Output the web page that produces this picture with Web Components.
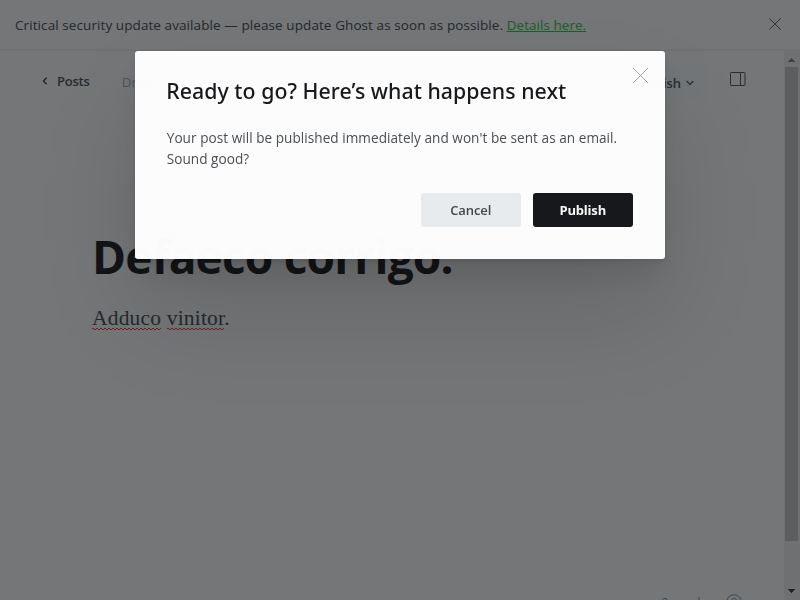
<!DOCTYPE html>
<html lang="en"><head><meta charset="utf-8"><title>Editor</title>
<style>html,body{margin:0;height:100%;overflow:hidden}body{font-family:"Open Sans","Noto Sans",sans-serif;background:#747678;color:#24282c}</style></head>
<body>
<gh-app></gh-app>
<gh-modal><span slot="title">Ready to go? Here’s what happens next</span><span slot="body">Your post will be published immediately and won't be sent as an email.<br>Sound good?</span>
<gh-button slot="actions">Cancel</gh-button><gh-button slot="actions" primary>Publish</gh-button></gh-modal>
<script>
const define=(name,html)=>{const t=document.createElement('template');t.innerHTML=html;
customElements.define(name,class extends HTMLElement{constructor(){super();this.attachShadow({mode:'open'}).append(t.content.cloneNode(true));}});};

define('gh-alert',`<style>:host{display:flex;box-sizing:border-box;height:51px;align-items:center;justify-content:space-between;padding:0 18px 0 15px;border-bottom:2px solid #6f7173;font-size:13.5px;line-height:20px;color:#24282c}
p{margin:1px 0 0;white-space:nowrap;letter-spacing:.085px}svg{display:block;margin-top:-1px}::slotted(a){color:#176022;letter-spacing:.04px}</style>
<p><slot></slot></p><svg width="14" height="14" viewBox="0 0 14 14" fill="none" stroke="#303336" stroke-width="1"><path d="M1.3 1.3 12.7 12.7M12.7 1.3 1.3 12.7"/></svg>`);

define('gh-toolbar',`<style>:host{display:flex;box-sizing:border-box;height:64px;padding:0 38px 4px 41px;align-items:center;font-size:13px;line-height:18px}
.back{display:flex;align-items:center;gap:8px;font-weight:600;letter-spacing:-.22px;color:#282b2e}.status{margin-left:32px;color:#505559;font-size:13.5px;margin-top:2px}.space{flex:1}
.pub{display:flex;box-sizing:border-box;align-items:center;height:33px;width:84px;justify-content:flex-end;gap:5px;padding:3px 13px 0 0;border-radius:3px;background:#727678;font-weight:600;color:#282c30;margin:0 23px 0 0;letter-spacing:-.1px}
svg{display:block}.side{margin-top:-4px}</style>
<span class="back"><svg width="8" height="10" viewBox="0 0 8 10" fill="none" stroke="#202326" stroke-width="1.25"><path d="M5.6 1.8 2.4 5l3.2 3.2"/></svg>Posts</span><span class="status">Draft</span><span class="space"></span>
<span class="pub">Publish<svg width="8" height="6" viewBox="0 0 8 6" fill="none" stroke="#303437" stroke-width="1.5"><path d="M.6.9 4 4.5 7.4.9"/></svg></span>
<svg class="side" width="16" height="15" viewBox="0 0 16 15" fill="none" stroke="#2b2e31"><rect x=".5" y=".5" width="14.5" height="13" rx=".7"/><path d="M10.5 .5v13"/></svg>`);

define('gh-document',`<style>:host{display:block;padding:109px 0 0 92px}h1{margin:0;font-size:46px;line-height:64px;font-weight:700;letter-spacing:-.8px;color:#121417;white-space:nowrap}
p{margin:14px 0 0;font:21.5px/32px "Liberation Serif",serif;letter-spacing:.18px;color:#25292d}
.w{padding-bottom:3px;background:repeating-linear-gradient(90deg,#7b2022 0 2px,transparent 2px 4px) 0 calc(100% - 1px)/100% 1px no-repeat,repeating-linear-gradient(90deg,transparent 0 2px,#7b2022 2px 4px) 0 100%/100% 1px no-repeat;padding-bottom:0}</style>
<h1>Defaeco corrigo.</h1><p><span class="w">Adduco</span> <span class="w">vinitor</span>.</p>`);

define('gh-footer',`<style>:host{display:flex;height:6px;overflow:hidden;align-items:flex-start;padding-right:42px;justify-content:flex-end;gap:20px;font-size:12px;line-height:16px;color:#3d4850}span{margin-top:1px}svg{display:block;flex:none}</style>
<span>2 words</span><svg width="16" height="16" viewBox="0 0 16 16" fill="none" stroke="#475057" stroke-width="1.1"><circle cx="8" cy="8" r="7.3"/><path d="M5.8 6.4a2.2 2.2 0 1 1 3.2 2c-.8.4-1 .8-1 1.5M8 11.5v1"/></svg>`);

define('gh-scrollbar',`<style>:host{display:flex;flex-direction:column;width:16px;background:#6e7072;align-items:center}svg{display:block;height:16px}.thumb{width:13px;height:474px;background:#5b5d5e;margin-right:1px}.track{flex:1}</style>
<svg width="16" viewBox="0 0 16 16"><path d="M7 7h1v1h1v1h1v1h1v1H4v-1h1V9h1V8h1z" fill="#414344"/></svg><div class="thumb"></div><div class="track"></div><svg width="16" viewBox="0 0 16 16"><path d="M4 5h7v1h-1v1H9v1H8v1H7V8H6V7H5V6H4z" fill="#222426"/></svg>`);

define('gh-app',`<style>:host{display:flex;flex-direction:column;height:600px}.row{display:flex;flex:1;min-height:0}.main{flex:1;display:flex;flex-direction:column;min-width:0}gh-document{flex:1}</style>
<gh-alert>Critical security update available — please update Ghost as soon as possible. <a href="#">Details here.</a></gh-alert>
<div class="row"><div class="main"><gh-toolbar></gh-toolbar><gh-document></gh-document><gh-footer></gh-footer></div><gh-scrollbar></gh-scrollbar></div>`);

define('gh-button',`<style>:host{display:flex;width:100px;height:34px;align-items:center;justify-content:center;border-radius:3px;background:#e7ebee;color:#434649;font-size:13px;font-weight:600;letter-spacing:-.08px}:host([primary]){background:#17181c;color:#f7f7f7;font-weight:700;letter-spacing:-.2px}</style><slot></slot>`);

define('gh-modal',`<style>:host{position:fixed;inset:0;display:flex;justify-content:center;align-items:flex-start;padding-top:50.5px}
section{position:relative;box-sizing:border-box;width:529.5px;height:208.5px;padding:24px 32px 32px 31px;border-radius:3px;background:rgba(254,254,254,.984);box-shadow:0 0 1px rgba(0,0,0,.25),0 3px 7px rgba(0,0,0,.08),0 18px 30px rgba(0,0,0,.08),0 55px 100px rgba(0,0,0,.12)}
h2{margin:0;font:500 21.3px/32px "Noto Sans",sans-serif;letter-spacing:.04px;color:#17191c;white-space:nowrap}p{margin:20px 0 0;padding-left:.5px;font-size:13.6px;line-height:21px;letter-spacing:.035px;color:#4a4f54;white-space:nowrap}
footer{display:flex;justify-content:flex-end;gap:12px;margin-top:24px}svg{position:absolute;top:16px;right:15.5px}</style>
<section><h2><slot name="title"></slot></h2><p><slot name="body"></slot></p><footer><slot name="actions"></slot></footer>
<svg width="17" height="17" viewBox="0 0 17 17" fill="none" stroke="#999b9d" stroke-width=".9"><path d="M1 1 16 16M16 1 1 16"/></svg></section>`);
</script></body></html>
